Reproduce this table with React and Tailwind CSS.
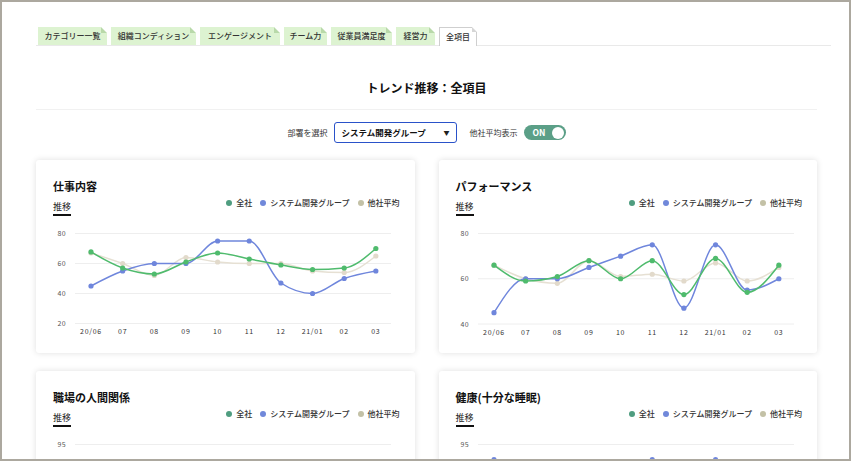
import React from "react";

const TABS = [
  { label: "カテゴリー一覧", w: 69 },
  { label: "組織コンディション", w: 85 },
  { label: "エンゲージメント", w: 80 },
  { label: "チーム力", w: 43 },
  { label: "従業員満足度", w: 61 },
  { label: "経営力", w: 39 },
  { label: "全項目", w: 38, active: true },
];

const XL = ["20/06", "07", "08", "09", "10", "11", "12", "21/01", "02", "03"];

const CARDS = [
  {
    title: "仕事内容",
    top: 80,
    px: 1.5,
    ticks: [80, 60, 40, 20],
    labels: true,
    green: [67.7, 57, 53, 61, 67, 63, 59, 56, 57, 70],
    blue: [45, 55, 60, 60, 75, 75, 47, 40, 50, 55],
    beige: [67, 60, 52, 64, 61, 60, 60, 55, 54, 65],
  },
  {
    title: "パフォーマンス",
    top: 80,
    px: 2.2625,
    ticks: [80, 60, 40],
    labels: true,
    green: [66, 59, 61, 68, 60, 68, 53, 69, 54, 66],
    blue: [45, 60, 60, 65, 70, 75, 47, 75, 55, 60],
    beige: [66, 60, 58, 68, 61, 62, 59, 67, 59, 65],
  },
  {
    title: "職場の人間関係",
    top: 95,
    px: 3,
    ticks: [95],
    labels: false,
    green: [82, 80, 81, 79, 83, 80, 82, 81, 80, 82],
    blue: [85, 78, 84, 80, 86, 79, 83, 80, 84, 81],
    beige: [80, 79, 80, 80, 79, 80, 81, 80, 79, 80],
  },
  {
    title: "健康(十分な睡眠)",
    top: 95,
    px: 3,
    ticks: [95],
    labels: false,
    green: [84, 83, 85, 82, 84, 86, 83, 85, 84, 83],
    blue: [90, 84, 86, 80, 85, 90, 82, 90, 84, 86],
    beige: [82, 82, 81, 82, 83, 82, 81, 82, 82, 81],
  },
];

function monotonePath(pts) {
  const n = pts.length;
  const h = [];
  const s = [];
  for (let i = 0; i < n - 1; i++) {
    h[i] = pts[i + 1][0] - pts[i][0];
    s[i] = (pts[i + 1][1] - pts[i][1]) / h[i];
  }
  const sg = (v) => (v < 0 ? -1 : 1);
  const t = new Array(n).fill(0);
  for (let i = 1; i < n - 1; i++) {
    const p = (s[i - 1] * h[i] + s[i] * h[i - 1]) / (h[i - 1] + h[i]);
    t[i] =
      (sg(s[i - 1]) + sg(s[i])) *
        Math.min(Math.abs(s[i - 1]), Math.abs(s[i]), 0.5 * Math.abs(p)) || 0;
  }
  t[0] = (3 * s[0] - t[1]) / 2;
  t[n - 1] = (3 * s[n - 2] - t[n - 2]) / 2;
  let d = `M${pts[0][0]},${pts[0][1]}`;
  for (let i = 0; i < n - 1; i++) {
    const dx = h[i] / 3;
    const [x0, y0] = pts[i];
    const [x1, y1] = pts[i + 1];
    d += ` C${x0 + dx},${y0 + dx * t[i]} ${x1 - dx},${y1 - dx * t[i + 1]} ${x1},${y1}`;
  }
  return d;
}

function Chart({ c }) {
  const xs = XL.map((_, i) => 55 + 31.65 * i);
  const yOf = (v) => 73.5 + (c.top - v) * c.px;
  const series = [
    { data: c.beige, color: "#e6e0d3", pt: "#e2dacb" },
    { data: c.blue, color: "#6f86dc", pt: "#6f86dc" },
    { data: c.green, color: "#4fbb6d", pt: "#4fbb6d" },
  ];
  const lastTickY = yOf(c.ticks[c.ticks.length - 1]);
  return (
    <svg width="378" height="137" className="block">
      <g transform="translate(0,-56)">
        {c.ticks.map((tk) => (
          <g key={tk}>
            <line x1="39" x2="355" y1={yOf(tk)} y2={yOf(tk)} stroke="#eeeeee" strokeWidth="1" />
            <text
              x="30"
              y={yOf(tk) + 2.5}
              textAnchor="end"
              fontSize="7"
              fill="#555"
              letterSpacing="0.4"
            >
              {tk}
            </text>
          </g>
        ))}
        {series.map((s, k) => {
          const pts = s.data.map((v, i) => [xs[i], yOf(v)]);
          return (
            <g key={k}>
              <path d={monotonePath(pts)} fill="none" stroke={s.color} strokeWidth="1.5" />
              {pts.map(([x, y], i) => (
                <circle key={i} cx={x} cy={y} r="2.6" fill={s.pt} />
              ))}
            </g>
          );
        })}
        {c.labels &&
          XL.map((l, i) => (
            <text
              key={l}
              x={xs[i]}
              y={lastTickY + 10.8}
              textAnchor="middle"
              fontSize="7"
              fill="#333"
              letterSpacing="0.7"
            >
              {l}
            </text>
          ))}
      </g>
    </svg>
  );
}

function Card({ c }) {
  return (
    <div className="h-[193px] bg-white rounded-[3px] shadow-[0_0_6px_rgba(0,0,0,0.13)] flex flex-col">
      <div className="pl-[17px] pr-[15px] pt-[19px]">
        <div className="text-[11px] leading-[14px] font-bold text-[#111]">{c.title}</div>
        <div className="mt-[4px] flex justify-between items-start">
          <div className="mt-[4px] text-[9px] leading-[12px] text-[#222] pb-[1px] border-b-2 border-[#111]">
            推移
          </div>
          <div className="flex items-center text-[8px] leading-[12px] font-medium text-[#333]">
            <span className="w-[6px] h-[6px] rounded-full bg-[#4f9d80] mr-[4px]" />
            <span>全社</span>
            <span className="w-[6px] h-[6px] rounded-full bg-[#7088da] ml-[8px] mr-[4px]" />
            <span>システム開発グループ</span>
            <span className="w-[6px] h-[6px] rounded-full bg-[#c3c1a6] ml-[8px] mr-[4px]" />
            <span>他社平均</span>
          </div>
        </div>
      </div>
      <Chart c={c} />
    </div>
  );
}

export default function App() {
  return (
    <div className="w-[851px] h-[461px] overflow-hidden border-2 border-[#aca89f] bg-white font-['Noto_Sans_CJK_JP','Noto_Sans',sans-serif]">
      <div className="pl-[34px] pt-[25px]">
        <div className="w-[795px] flex gap-[4px] pl-[2px] border-b border-[#e9e9e9]">
          {TABS.map((t) => (
            <div
              key={t.label}
              style={{ width: t.w }}
              className={
                t.active
                  ? "relative h-[19px] -mb-px flex items-center justify-center text-[8px] font-medium text-[#333] bg-white border border-b-0 border-[#cfcfcf]"
                  : "relative h-[18px] flex items-center justify-center text-[8px] font-medium text-[#333] bg-[#ddf3d1]"
              }
            >
              {t.label}
              <span
                className={
                  t.active
                    ? "absolute -top-px -right-px w-0 h-0 border-t-[5px] border-t-white border-l-[5px] border-l-[#d6d6d6]"
                    : "absolute top-0 right-0 w-0 h-0 border-t-[6px] border-t-white border-l-[6px] border-l-[#b8d9a9]"
                }
              />
            </div>
          ))}
        </div>
      </div>
      <div className="w-[781px] ml-[34px]">
        <div className="mt-[34px] text-center text-[12px] leading-[16px] font-bold text-[#111]">
          トレンド推移：全項目
        </div>
        <div className="mt-[13px] h-px bg-[#f1f1f1]" />
        <div className="mt-[12px] h-[21px] flex justify-center items-center text-[8px] text-[#333]">
          <span>部署を選択</span>
          <div className="ml-[6px] w-[123px] h-[21px] border-[1.5px] border-[#2a52c9] rounded-[3px] flex items-center justify-between pl-[7px] pr-[6px]">
            <span className="font-bold text-[8.5px] text-[#111]">システム開発グループ</span>
            <span className="text-[6px] text-[#222]">▼</span>
          </div>
          <span className="ml-[13px]">他社平均表示</span>
          <div className="ml-[6px] w-[42px] h-[15px] rounded-full bg-[#5b9f87] flex items-center justify-between pl-[9px] pr-[1.5px]">
            <span className="text-white font-bold text-[8.5px] leading-none">ON</span>
            <span className="w-[12px] h-[12px] rounded-full bg-white" />
          </div>
        </div>
        <div className="mt-[17px] grid grid-cols-2 gap-x-[24px] gap-y-[18px]">
          {CARDS.map((c) => (
            <Card key={c.title} c={c} />
          ))}
        </div>
      </div>
    </div>
  );
}
